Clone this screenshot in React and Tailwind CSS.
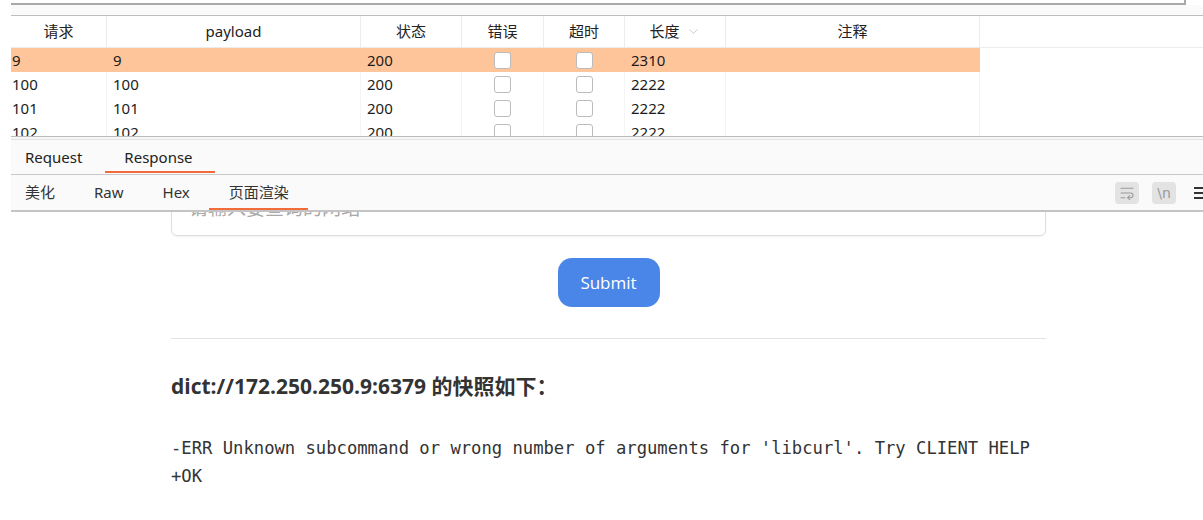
import { WrapText, ChevronDown } from 'lucide-react'

const cols = [
  { key: 'req', label: '请求', w: 'w-[96px]', pl: 'pl-[1px]' },
  { key: 'payload', label: 'payload', w: 'w-[254px]', pl: 'pl-[6px]' },
  { key: 'status', label: '状态', w: 'w-[101px]', pl: 'pl-[6px]' },
  { key: 'err', label: '错误', w: 'w-[82px]', pl: '' },
  { key: 'timeout', label: '超时', w: 'w-[81px]', pl: '' },
  { key: 'len', label: '长度', w: 'w-[101px]', pl: 'pl-[6px]' },
  { key: 'note', label: '注释', w: 'w-[254px]', pl: 'pl-[6px]' },
]

const rows = [
  { req: '9', payload: '9', status: '200', len: '2310', active: true },
  { req: '100', payload: '100', status: '200', len: '2222' },
  { req: '101', payload: '101', status: '200', len: '2222' },
  { req: '102', payload: '102', status: '200', len: '2222' },
]

function Checkbox() {
  return <div className="w-[17px] h-[17px] rounded-[3px] border border-[#bcbcbc] bg-white" />
}

function Cell({ col, row }) {
  const line = row.active ? 'border-transparent' : 'border-[#f4f4f4]'
  const base = `${col.w} shrink-0 h-full border-r ${line} flex items-center`
  if (col.key === 'err' || col.key === 'timeout') {
    return (
      <div className={`${base} justify-center`}>
        <Checkbox />
      </div>
    )
  }
  return <div className={`${base} ${col.pl}`}>{row[col.key] || ''}</div>
}

export default function App() {
  return (
    <div
      className="w-[1203px] h-[520px] bg-white overflow-hidden flex text-[#1b1b1b]"
      style={{ fontFamily: '"Noto Sans", "Noto Sans CJK SC", sans-serif' }}
    >
      <div className="w-[11px] shrink-0" />
      <div className="w-[1192px] shrink-0 flex flex-col overflow-hidden">
        {/* top box edge */}
        <div className="h-[5px] w-[1175px] border-b-2 border-r-2 border-[#a9a9a9]" />
        <div className="h-[11px] bg-[#fafafa] border-b border-[#bdbdbd]" />

        {/* table header */}
        <div className="h-[32px] flex border-b border-[#ececec] text-[15px] text-[#222]">
          {cols.map((c) => (
            <div
              key={c.key}
              className={`${c.w} shrink-0 h-full border-r border-[#ececec] flex items-center justify-center gap-[6px]`}
            >
              <span>{c.label}</span>
              {c.key === 'len' && <ChevronDown size={15} strokeWidth={1.2} className="text-[#b8b8b8]" />}
            </div>
          ))}
        </div>

        {/* table body */}
        <div className="h-[88px] overflow-hidden text-[15px]">
          {rows.map((r, i) => (
            <div key={i} className="h-[24px] flex">
              <div className={`flex h-full ${r.active ? 'bg-[#ffc59a]' : ''}`}>
                {cols.map((c) => (
                  <Cell key={c.key} col={c} row={r} />
                ))}
              </div>
              <div className="flex-1" />
            </div>
          ))}
        </div>
        <div className="h-px bg-[#bbbbbb]" />
        <div className="h-[2px] bg-[#f7f7f7]" />
        <div className="h-px bg-[#e2e2e2]" />

        {/* request / response tabs */}
        <div className="h-[35px] shrink-0 bg-[#fafafa] border-b border-[#c9c9c9] flex pl-[14px] gap-[42px] text-[15px] text-[#222]">
          <div className="h-full flex items-center">Request</div>
          <div className="relative h-full flex items-center">
            Response
            <div className="absolute -left-[19px] -right-[22px] bottom-[1px] h-[2px] bg-[#f26b3a]" />
          </div>
        </div>

        {/* sub tabs */}
        <div className="h-[37px] shrink-0 bg-[#fafafa] border-b-2 border-[#c4c4c4] flex items-stretch justify-between text-[15px] text-[#333]">
          <div className="flex pl-[14px] gap-[39px]">
            <div className="h-full flex items-center">美化</div>
            <div className="h-full flex items-center">Raw</div>
            <div className="h-full flex items-center">Hex</div>
            <div className="relative h-full flex items-center">
              页面渲染
              <div className="absolute -left-[20px] -right-[19px] bottom-0 h-[2px] bg-[#f26b3a]" />
            </div>
          </div>
          <div className="flex items-center gap-[13px] mr-[-5px]">
            <div className="w-[24px] h-[22px] rounded-[4px] bg-[#e3e3e3] flex items-center justify-center text-[#9a9a9a]">
              <WrapText size={16} strokeWidth={1.6} />
            </div>
            <div
              className="w-[24px] h-[22px] rounded-[4px] bg-[#e3e3e3] flex items-center justify-center text-[#9a9a9a] text-[14px] leading-none"
              style={{ fontFamily: '"DejaVu Sans", sans-serif' }}
            >
              \n
            </div>
            <div className="w-[14px] flex flex-col gap-[3px] ml-[5px]">
              <div className="h-[2px] bg-[#333]" />
              <div className="h-[2px] bg-[#333]" />
              <div className="h-[2px] bg-[#333]" />
            </div>
          </div>
        </div>

        {/* rendered page */}
        <div className="flex-1 overflow-hidden">
          <div className="ml-[160px] w-[875px] flex flex-col">
            <div className="mt-[-26px] h-[50px] rounded-[6px] border border-[#dedede] shadow-[0_1px_2px_rgba(0,0,0,0.06)] flex items-center pl-[17px] pb-[6px] text-[19px] text-[#a8a8a8]">
              请输入要查询的网站
            </div>
            <div className="flex justify-center mt-[22px]">
              <button
                className="w-[102px] h-[49px] rounded-[14px] bg-[#4a86e8] text-white text-[17px]"
                style={{ fontFamily: '"Open Sans", "Noto Sans", sans-serif' }}
              >
                Submit
              </button>
            </div>
            <div className="mt-[31px] h-px bg-[#e3e3e3]" />
            <div
              className="mt-[33px] text-[21px] leading-[28px] font-bold text-[#333]"
              style={{ fontFamily: '"Open Sans", "Noto Sans CJK SC", sans-serif' }}
            >
              dict://172.250.250.9:6379 的快照如下：
            </div>
            <div
              className="mt-[34px] text-[17.2px] leading-[28px] text-[#333] whitespace-pre"
              style={{ fontFamily: '"DejaVu Sans Mono", monospace' }}
            >
              {"-ERR Unknown subcommand or wrong number of arguments for 'libcurl'. Try CLIENT HELP\n+OK"}
            </div>
          </div>
        </div>
      </div>
    </div>
  )
}
